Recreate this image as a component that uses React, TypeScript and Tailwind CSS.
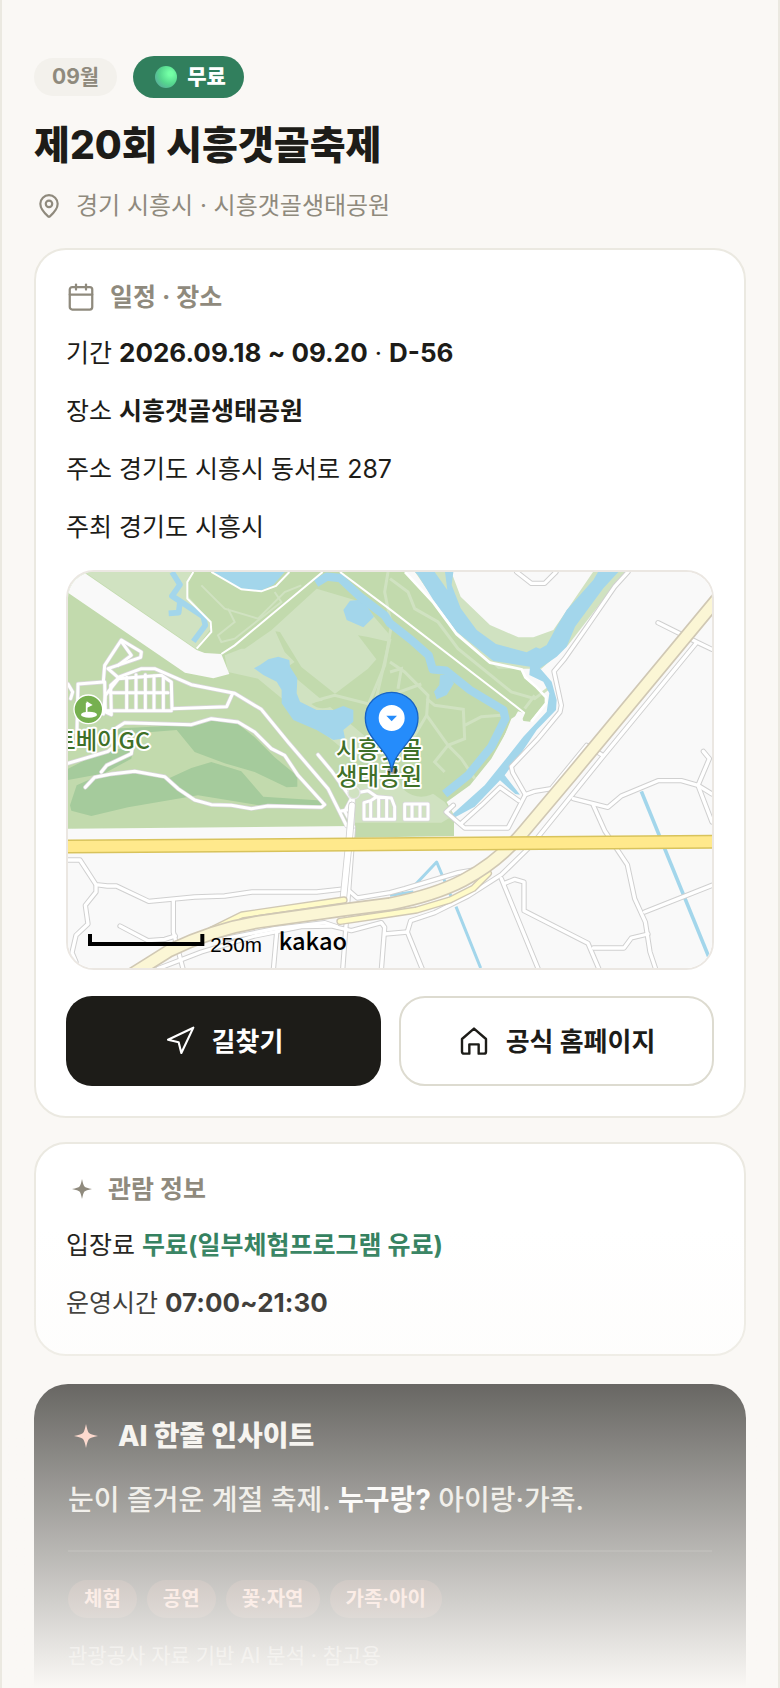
import type { ReactNode } from "react";
import { Calendar, MapPin, Navigation } from "lucide-react";

const tags = ["체험", "공연", "꽃·자연", "가족·아이"];

// minor roads on the plain ground
const streets = [
  "M0 864H36L84 938L118 942L145 942L242 988L380 975L470 972L552 960H746L836 950",
  "M84 942V960L52 1000L60 1056L24 1090L12 1142L24 1170",
  "M316 985V1080L346 1194",
  "M156 1062L240 1106L290 1102L322 1092",
  "M836 950L868 978L966 962L1010 950L1170 902L1240 890",
  "M270 1190L400 1140L560 1092L700 1064L790 1062L850 1076L940 1052L950 1066L940 1194",
  "M470 1100L620 1070L770 1052L806 1064",
  "M626 1082L616 1194",
  "M950 1086L1018 1080",
  "M1064 1194L1018 1080L1028 1046L1100 1022L1200 972L1300 908L1390 820L1600 560L1886 212",
  "M1886 210L1770 152M1886 210L1932 232",
  "M1680 0L1640 44L1560 160L1490 260L1458 298L1480 400L1476 420L1410 500L1330 584L1334 602L1372 668L1320 768H1190L1134 720L1156 700",
  "M1180 754L1240 700L1296 646L1352 686",
  "M1372 668L1400 658L1450 650L1556 520L1604 550",
  "M1346 0L1390 34L1430 34L1464 0",
  "M1516 680L1620 706L1660 672L1770 626H1840L1890 640L1932 666",
  "M1576 700L1610 776L1678 878L1700 980L1732 1050L1746 1140L1764 1194",
  "M1730 1020L1932 940",
  "M1576 1128H1668L1690 1098L1740 1086",
  "M1310 934L1340 922L1368 930L1368 1016L1560 1114L1594 1194",
  "M1300 920L1412 1194",
  "M1890 640L1932 750M1890 640L1924 560L1906 538",
  "M856 770L824 1194",
];

// paths of the golf course and the park
const trails = [
  "M0 574L120 538L190 480M100 600L116 580L190 545L194 520",
  "M126 480L170 452L370 458L430 440L510 450L560 480L610 530L650 550L690 610L770 698L760 706L600 702L550 710L490 700L430 698L380 684L330 650L290 614L200 598L130 606L80 616L52 646",
  "M106 330L110 280L160 204L220 240L218 256L120 290L150 316L220 290L260 290L370 338L500 364L580 412L660 510L780 650L836 762",
  "M160 208L190 250L150 280",
  "M106 330L30 336L26 520M0 336L14 360L8 380",
  "M110 330L112 420L130 428L128 340L150 320L280 310L310 330L312 410L476 404L494 364",
  "M112 416H310M128 362H300M176 316V416M204 308V416M232 308V416M258 312V416M286 316V416",
  "M150 322L112 370L106 426",
  "M750 548L790 596L850 680L830 718L856 764",
  "M856 680L854 764M816 718L850 712",
  "M888 742V692L908 686V742M908 686L926 674L970 678L980 704V742H888M932 676V742M956 678V742M1010 742V696H1080V742H1010M1032 700V740M1056 700V740",
  "M858 664L900 656L926 674",
];

function FestivalMap() {
  return (
    <svg
      viewBox="0 0 1932 1188"
      preserveAspectRatio="xMidYMid slice"
      className="block h-[396px] w-full"
      role="img"
      aria-label="시흥갯골생태공원 지도"
    >
      <rect width="1932" height="1188" fill="#f9f9f9" />
      {/* greens */}
      <path
        d="M0 0H1011L1096 89L1166 184L1266 269L1361 289L1371 314L1406 344L1431 374V394L1386 449L1361 446L1371 424L1350 418L1270 560L1206 640L1136 690L1158 730V792L856 797V762L0 770Z"
        fill="#c2daad"
      />
      <path d="M50 0H370L358 30V70L420 140L428 170L384 230Z" fill="#d0e2c1" />
      <path
        d="M530 230L610 175L746 50L880 90L966 190V210L900 195L870 190L925 262L900 290L801 365L700 285L636 180L622 178L650 240L680 270L650 290L900 500L860 560L570 320L480 300L470 250L520 230Z"
        fill="#d0e2c1"
      />
      <path
        d="M840 620L900 590L1060 640L1130 690L1158 730L1120 752H860Z"
        fill="#d0e2c1"
      />
      <ellipse cx="1060" cy="610" rx="70" ry="64" fill="#c2daad" />
      <path d="M730 396Q770 376 800 398Q760 420 730 396Z" fill="#c2daad" />
      <g fill="none" stroke="#d0e2c1" strokeWidth="9">
        <path d="M966 20L1020 60L1040 110L1110 150L1170 230L1330 360L1400 380L1440 350M1370 410L1400 370" />
        <path d="M966 200L920 400L800 370L690 400M966 270L1010 300L1080 370L1076 430L1140 520L1180 560L1220 620" />
        <path d="M1076 380L1100 400L1186 412L1190 500L1140 520L1100 570L1130 600M1190 460L1240 434L1300 430" />
        <path d="M1076 430L1040 490L970 560M966 370L1060 336M966 300L1000 290L990 350" />
        <path d="M700 40L650 60L570 140L470 110L400 40M480 110L500 150L450 190L460 210L500 200L640 90L620 60" strokeWidth="6" />
        <path d="M960 0L950 60L970 160L950 280L900 400" />
      </g>
      <g fill="#a5cb9c">
        <path d="M130 470L340 460L440 444L510 456L560 496L620 556L688 612V644L656 646L560 600L470 574L380 540L326 474L146 488Z" />
        <path d="M0 590L100 540L196 524L190 560L110 604L0 624Z" />
        <path d="M6 700L26 640L80 616L200 598L300 620L370 588L430 570L520 598L586 674L770 686V700L600 704L390 670L180 706L70 732L10 716Z" />
      </g>
      <path
        d="M0 0H46L386 234L410 243L460 246L484 306L436 319L351 302L0 62Z"
        fill="#f9f9f9"
      />
      {/* water */}
      <path
        d="M1150 0L1178 74L1266 159L1351 196H1396L1456 174L1575 0H1670L1500 220L1420 290H1290L1166 179L1041 0Z"
        fill="#d0e2c1"
      />
      <g fill="#a3d6eb">
        <path d="M1041 0H1100L1138 54L1131 0H1156L1151 39L1178 109L1226 174L1284 216L1376 241L1404 226L1416 230L1436 219L1466 164L1496 114L1576 24L1590 0H1651L1606 49L1521 164L1496 224L1466 254L1416 289L1451 329L1466 384L1464 414L1406 474L1366 534L1310 610L1356 668L1342 666L1296 625L1220 704L1150 742L1154 726L1250 640L1311 564L1366 494L1436 419L1444 364L1426 329L1384 309L1386 284L1276 267L1166 179L1096 84L1050 10Z" />
        <path d="M558 289L576 279L601 262L631 254L664 264L666 284L688 319L686 364L696 389L746 414L796 414L826 402L856 414V449L826 474L831 499L796 504L746 474L676 444L641 394V354L626 329L586 309Z" />
        <path d="M826 114L846 86L870 84L891 94L918 134L886 166L836 144Z" />
        <path d="M436 0L516 49L576 57L616 39L650 0Z" />
        <path d="M1116 310L1140 306L1158 334L1136 369L1106 382L1098 359L1114 339Z" />
      </g>
      <g fill="none" stroke="#a3d6eb" strokeLinejoin="round">
        <path d="M312 0L336 38L312 72L340 90L406 134L412 160L376 208M336 88L332 122L302 124" strokeWidth="17" />
        <path d="M744 34L776 14L816 18L876 74L950 130L966 154L1030 204L1082 250L1094 292L1134 296L1206 354L1306 414L1312 440L1270 524L1200 610L1130 666" strokeWidth="25" />
        <path d="M1036 944L1106 870L1150 975M1164 1004L1238 1188M966 970L1036 960" strokeWidth="9" />
        <path d="M1720 658L1922 1154" strokeWidth="11" />
      </g>
      <path d="M1330 440L1356 424L1366 446L1316 530L1270 600L1236 624L1290 540Z" fill="#f9f9f9" />
      <g fill="none" stroke="#fff" strokeWidth="6">
        <path d="M460 246L500 220L764 0M816 0L966 112L1340 400L1370 424M386 230L430 180L428 150L358 80V30L376 0" />
        <path d="M430 0L520 52L580 58L624 42L664 0" />
        <path d="M1011 0L1096 92L1166 187L1266 272L1361 292L1372 316L1406 346L1434 376V394L1390 449" strokeWidth="8" />
      </g>
      <g fill="none" strokeLinejoin="round" strokeLinecap="round">
        {streets.map((d) => <path key={d} d={d} stroke="#d0d0d0" strokeWidth="16" />)}
        {streets.map((d) => <path key={d} d={d} stroke="#fff" strokeWidth="10" />)}
        {trails.map((d) => <path key={d} d={d} stroke="#d8d6da" strokeWidth="13" />)}
        {trails.map((d) => <path key={d} d={d} stroke="#fff" strokeWidth="9" />)}
        <circle cx="858" cy="662" r="18" fill="#d0e2c1" stroke="#e4e4e4" strokeWidth="4" />
        <path d="M852 700L844 800L826 980" stroke="#d0d0d0" strokeWidth="22" />
        <path d="M852 700L844 800L826 980" stroke="#fff" strokeWidth="17" />
        {/* side lanes and the diagonal avenue */}
        <path d="M430 1074L521 1029L828 984M816 1048L966 1026L1046 1014L1146 984L1216 949L1261 904" stroke="#d0c8b4" strokeWidth="22" />
        <path d="M430 1074L521 1029L828 984M816 1048L966 1026L1046 1014L1146 984L1216 949L1261 904" stroke="#fffbc8" strokeWidth="14" />
        <path d="M1950 78L1510 609L1366 780Q1290 870 1186 925Q1100 970 966 996L826 1014L576 1049Q440 1070 306 1135L196 1204" stroke="#d0c8b4" strokeWidth="42" />
        <path d="M1950 78L1510 609L1366 780Q1290 870 1186 925Q1100 970 966 996L826 1014L576 1049Q440 1070 306 1135L196 1204" stroke="#fbf6d5" strokeWidth="32" />
        <path d="M-20 824L1952 809" stroke="#d8c35c" strokeWidth="42" />
        <path d="M-20 824L1952 809" stroke="#ffe98c" strokeWidth="33" />
      </g>
      {/* golf course mark */}
      <circle cx="61" cy="412" r="43" fill="#76b04f" stroke="#fff" strokeWidth="4" />
      <ellipse cx="63" cy="428" rx="24" ry="9" fill="#fff" />
      <path d="M56 428V392" stroke="#fff" strokeWidth="5" />
      <path d="M56 388L74 399L56 408Z" fill="#fff" />
      <g
        fill="#3f7028"
        stroke="#fff"
        strokeWidth="12"
        paintOrder="stroke"
        strokeLinejoin="round"
        fontSize="70"
        fontWeight="500"
        fontFamily="'Noto Sans CJK KR', sans-serif"
      >
        <text x="246" y="530" textAnchor="end">트베이GC</text>
        <text x="933" y="558" textAnchor="middle">시흥갯골</text>
        <text x="933" y="638" textAnchor="middle">생태공원</text>
      </g>
      {/* marker */}
      <ellipse cx="974" cy="596" rx="16" ry="9" fill="#000" opacity="0.4" />
      <path
        d="M971 600C966 530 892 506 892 438A79 77 0 0 1 1050 438C1050 506 978 530 971 600Z"
        fill="#258cfb"
        stroke="#1763c4"
        strokeWidth="4"
      />
      <circle cx="971" cy="438" r="39" fill="#fff" />
      <path d="M955 431H987L971 448Z" fill="#258cfb" />
      {/* scale */}
      <path d="M66 1086V1116H403V1086" fill="none" stroke="#000" strokeWidth="12" />
      <text x="427" y="1139" fontSize="62" fontFamily="'Liberation Sans', sans-serif">250m</text>
      <text x="632" y="1133" fontSize="71" fontFamily="'Noto Sans CJK KR', sans-serif" fontWeight="500">kakao</text>
    </svg>
  );
}

function Sparkle({ className }: { className: string }) {
  return (
    <svg viewBox="0 0 24 24" fill="currentColor" className={className} aria-hidden="true">
      <path d="M12 0Q13.500 7.500 15 9Q16.500 10.500 24 12Q16.500 13.500 15 15Q13.500 16.500 12 24Q10.500 16.500 9 15Q7.500 13.500 0 12Q7.500 10.500 9 9Q10.500 7.500 12 0Z" />
    </svg>
  );
}

function HomeIcon() {
  return (
    <svg
      viewBox="0 0 24 24"
      fill="none"
      stroke="currentColor"
      strokeWidth="1.800"
      strokeLinejoin="round"
      className="size-8"
      aria-hidden="true"
    >
      <path d="M3 10.500L12 2.700L21 10.500V20Q21 21.500 19.500 21.500H15.500V14.500H8.500V21.500H4.500Q3 21.500 3 20Z" />
    </svg>
  );
}

function Row({ label, children }: { label: string; children: ReactNode }) {
  return (
    <p className="text-[25px] leading-[38px]">
      {label} {children}
    </p>
  );
}

export default function App() {
  return (
    <main className="relative overflow-hidden border-x-2 border-[#ebe9e1] bg-[#faf8f5] px-8 pt-14 font-['Inter','Noto_Sans_CJK_KR',sans-serif] text-[#1d1c18]">
      <header>
        <div className="flex items-center gap-4">
          <span className="flex h-[38px] items-center rounded-full bg-[#f3f1ec] px-[18px] text-[21px] font-bold text-[#8f8a7d]">
            09월
          </span>
          <span className="flex h-[42px] items-center gap-2.5 rounded-full bg-[#317f5d] pl-[22px] pr-[18px] text-[21px] font-extrabold text-white">
            <span className="size-[22px] rounded-full bg-[radial-gradient(circle_at_70%_35%,#73ffa5_10%,#55d68e_50%,#5a9da0_95%)]" />
            무료
          </span>
        </div>
        <h1 className="mt-5 text-[39px] font-extrabold leading-[54px]">제20회 시흥갯골축제</h1>
        <p className="mt-3.5 flex items-center gap-3 text-2xl leading-10 text-[#8f8a7d]">
          <MapPin className="mx-0.5 size-[26px]" strokeWidth={2} />
          경기 시흥시 · 시흥갯골생태공원
        </p>
      </header>

      <section className="mt-[22px] rounded-[32px] border-2 border-[#ebe9e1] bg-white p-[30px]">
        <h2 className="flex items-center gap-3.5 text-[25px] font-bold leading-[34px] text-[#8f8a7d]">
          <Calendar className="size-[30px]" strokeWidth={1.8} />
          일정 · 장소
        </h2>
        <div className="mt-5 space-y-5">
          <Row label="기간">
            <b className="text-[26px] font-bold">2026.09.18 ~ 09.20</b> · <b className="text-[26px] font-bold">D-56</b>
          </Row>
          <Row label="장소"><b className="font-bold">시흥갯골생태공원</b></Row>
          <Row label="주소">경기도 시흥시 동서로 287</Row>
          <Row label="주최">경기도 시흥시</Row>
        </div>
        <div className="mt-6 overflow-hidden rounded-[28px] border-2 border-[#ebe7e2]">
          <FestivalMap />
        </div>
        <div className="mt-[26px] grid grid-cols-2 gap-[18px] text-[26px] font-bold">
          <button
            type="button"
            className="flex h-[90px] items-center justify-center gap-4 rounded-[26px] bg-[#1d1c18] text-white"
          >
            <Navigation className="size-8" strokeWidth={1.6} />
            길찾기
          </button>
          <a
            href="#"
            className="flex h-[90px] items-center justify-center gap-4 rounded-[26px] border-2 border-[#dddbd0] bg-white"
          >
            <HomeIcon />
            공식 홈페이지
          </a>
        </div>
      </section>

      <section className="mt-6 rounded-[32px] border-2 border-[#ebe9e1] bg-white px-[30px] pb-8 pt-7">
        <h2 className="flex items-center gap-4 text-[25px] font-bold leading-[34px] text-[#8f8a7d]">
          <Sparkle className="ml-1.5 size-5" />
          관람 정보
        </h2>
        <div className="mt-5 space-y-5">
          <Row label="입장료">
            <b className="font-bold text-[#317f5d]">무료(일부체험프로그램 유료)</b>
          </Row>
          <Row label="운영시간"><b className="text-[26px] font-bold">07:00~21:30</b></Row>
        </div>
      </section>

      <section className="mt-7 rounded-t-[34px] bg-[#1d1c18] p-[34px] pb-3.5 text-[#e4e2dc]">
        <h2 className="flex items-center gap-5 text-[28px] font-extrabold leading-9 text-[#f3f1ec]">
          <Sparkle className="ml-1.5 size-6 text-[#ffc0ae]" />
          AI 한줄 인사이트
        </h2>
        <p className="mt-6 text-[28px] font-medium leading-[44px]">
          눈이 즐거운 계절 축제. <b className="font-bold text-white">누구랑?</b> 아이랑·가족.
        </p>
        <div className="mt-7 border-t-2 border-white/10 pt-7">
          <ul className="flex gap-2.5">
            {tags.map((tag) => (
              <li
                key={tag}
                className="flex h-[38px] items-center rounded-full bg-[#ff8f75]/20 px-4 text-xl font-bold text-[#ffc0ae]"
              >
                {tag}
              </li>
            ))}
          </ul>
          <p className="mt-5 text-[21px] leading-9 text-white/60">관광공사 자료 기반 AI 분석 · 참고용</p>
        </div>
      </section>

      {/* fade into the page ground */}
      <div className="pointer-events-none absolute inset-x-0 bottom-0 h-[460px] bg-linear-to-b from-[#faf8f5]/0 to-[#faf8f5]" />
    </main>
  );
}
